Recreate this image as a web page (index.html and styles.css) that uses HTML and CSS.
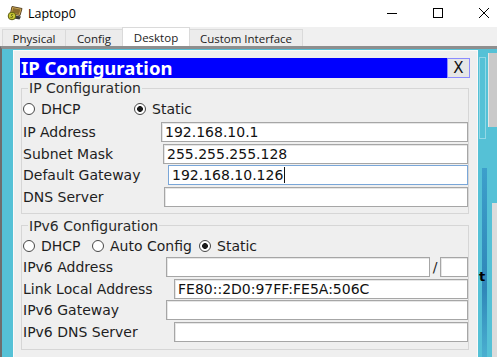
FILE: index.html
```html
<!DOCTYPE html>
<html>
<head>
<meta charset="utf-8">
<title>Laptop0</title>
<link rel="stylesheet" href="styles.css">
</head>
<body>
<div class="window">
  <div class="titlebar">
    <svg class="app-icon" viewBox="0 0 16 16">
      <polygon points="5,1.5 15,3.5 13,10.5 3.5,8.5" fill="#d8b25a" stroke="#5b4624" stroke-width="1"/>
      <polygon points="6,3 13.5,4.5 12,9.3 5,7.8" fill="#8a6a2c"/>
      <polygon points="3,9.5 14,11.5 12.5,14.5 1,12.5" fill="#3b3b3b"/>
      <circle cx="5" cy="11" r="3.8" fill="#c9c934" stroke="#5d5d12" stroke-width="1"/>
      <path d="M6.2 9.6 C5 8.9 3.6 9.6 4.6 10.6 C5.6 11.4 6.4 12.2 4.6 12.6 C4 12.7 3.6 12.5 3.4 12.2" fill="none" stroke="#4a4a0e" stroke-width="0.9"/>
    </svg>
    <span class="title">Laptop0</span>
    <div class="controls">
      <span class="ctl"><svg viewBox="0 0 10 10"><line x1="0" y1="5.5" x2="10" y2="5.5" stroke="#000" stroke-width="1"/></svg></span>
      <span class="ctl"><svg viewBox="0 0 10 10"><rect x="0.5" y="0.5" width="9" height="9" fill="none" stroke="#000" stroke-width="1"/></svg></span>
      <span class="ctl"><svg viewBox="0 0 10 10"><path d="M0 0 L10 10 M10 0 L0 10" stroke="#000" stroke-width="1"/></svg></span>
    </div>
  </div>

  <div class="tabs">
    <div class="tab t-phys">Physical</div>
    <div class="tab t-conf">Config</div>
    <div class="tab t-desk active">Desktop</div>
    <div class="tab t-cust">Custom Interface</div>
  </div>

  <div class="frame">
    <div class="gutter"></div>
    <div class="dialog">
      <div class="dlg-head">
        <span class="dlg-title">IP Configuration</span>
        <span class="dlg-close">X</span>
      </div>

      <fieldset class="group g4">
        <legend>IP Configuration</legend>
        <div class="radios">
          <span class="opt o4-dhcp"><span class="radio"></span>DHCP</span>
          <span class="opt"><span class="radio on"></span>Static</span>
        </div>
        <div class="rows">
          <div class="row"><span class="lbl l-ip">IP Address</span><span class="field">192.168.10.1</span></div>
          <div class="row"><span class="lbl l-mask">Subnet Mask</span><span class="field">255.255.255.128</span></div>
          <div class="row"><span class="lbl l-gw">Default Gateway</span><span class="field focus">192.168.10.126<span class="caret"></span></span></div>
          <div class="row"><span class="lbl l-dns">DNS Server</span><span class="field"></span></div>
        </div>
      </fieldset>

      <fieldset class="group g6">
        <legend>IPv6 Configuration</legend>
        <div class="radios">
          <span class="opt o6-dhcp"><span class="radio"></span>DHCP</span>
          <span class="opt o6-auto"><span class="radio"></span>Auto Config</span>
          <span class="opt"><span class="radio on"></span>Static</span>
        </div>
        <div class="rows">
          <div class="row"><span class="lbl l-v6addr">IPv6 Address</span><span class="field"></span><span class="slash">/</span><span class="field prefix"></span></div>
          <div class="row"><span class="lbl l-link">Link Local Address</span><span class="field">FE80::2D0:97FF:FE5A:506C</span></div>
          <div class="row"><span class="lbl l-v6gw">IPv6 Gateway</span><span class="field"></span></div>
          <div class="row"><span class="lbl l-v6dns">IPv6 DNS Server</span><span class="field"></span></div>
        </div>
      </fieldset>
    </div>
    <div class="strip">
      <div class="strip-outline"></div>
      <div class="strip-scroll"></div>
      <div class="strip-dark"></div>
      <div class="strip-gray"></div>
      <span class="strip-t">t</span>
    </div>
  </div>
</div>
</body>
</html>
```

FILE: styles.css
```css
* { box-sizing: border-box; }

html, body {
  margin: 0;
  padding: 0;
  width: 497px;
  height: 357px;
  overflow: hidden;
  background: #ffffff;
}

body {
  font-family: "DejaVu Sans", Verdana, sans-serif;
  color: #1e1e1e;
}

.window {
  display: flex;
  flex-direction: column;
  height: 357px;
}

/* title bar */
.titlebar {
  height: 27px;
  flex: none;
  display: flex;
  align-items: center;
  background: #fff;
}

.app-icon {
  width: 16px;
  height: 16px;
  margin-left: 7px;
  margin-top: -2px;
}

.title {
  margin-left: 5px;
  font-family: "Open Sans", "Noto Sans", sans-serif;
  font-size: 12.5px;
  color: #000;
}

.controls {
  margin-left: auto;
  margin-right: -10px;
  display: flex;
  height: 27px;
}

.ctl {
  width: 46px;
  height: 27px;
  display: flex;
  align-items: center;
  justify-content: center;
}

.ctl svg {
  width: 10px;
  height: 10px;
  margin-top: -2px;
}

/* tabs */
.tabs {
  height: 19px;
  flex: none;
  display: flex;
  align-items: flex-end;
  padding-left: 2px;
  background: #f0f0f0;
}

.tab {
  height: 17px;
  margin-right: -1px;
  border: 1px solid #dadada;
  border-bottom: none;
  background: #ececec;
  display: flex;
  align-items: center;
  justify-content: center;
  font-family: "Open Sans", "Noto Sans", sans-serif;
  font-size: 11.5px;
  color: #222;
}

.tab.active {
  height: 19px;
  background: #fff;
}

.t-phys { width: 64px; }
.t-conf { width: 58px; }
.t-desk { width: 68px; }
.t-cust { width: 114px; }

/* frame */
.frame {
  flex: 1;
  min-height: 0;
  display: flex;
  border-top: 3px solid #8e8e8e;
  border-left: 2px solid #6e6e6e;
  padding-top: 1px;
  background: #55c1d6;
}

.gutter {
  width: 11px;
  flex: none;
}

.dialog {
  width: 465px;
  flex: none;
  background: #efefef;
  border: 1px solid #fafafa;
  border-bottom: none;
  padding: 7px 7px 0 6px;
}

.dlg-head {
  height: 20px;
  display: flex;
  background: #0000ff;
}

.dlg-title {
  flex: 1;
  padding-left: 1px;
  color: #fff;
  font-family: "Noto Sans", "Open Sans", sans-serif;
  font-weight: bold;
  font-size: 18.5px;
  line-height: 20px;
  white-space: nowrap;
}

.dlg-close {
  width: 23px;
  height: 20px;
  flex: none;
  display: flex;
  align-items: center;
  justify-content: center;
  background: #e6e6e6;
  border: 1px solid #8c8cff;
  font-size: 15px;
  color: #111;
}

/* group boxes */
.group {
  margin: 3px 1px 0;
  padding: 0 0 6px 0;
  border: 1px solid #d6d6d6;
  min-width: 0;
}

.g6 {
  margin-top: 5px;
  padding-bottom: 7px;
}

.group legend {
  margin-left: 6px;
  padding: 0 1px;
  font-size: 14px;
  line-height: 14px;
  color: #2a2a2a;
}

.radios {
  height: 18px;
  margin-top: 5px;
  padding-left: 1px;
  display: flex;
  align-items: center;
}

.g6 .radios {
  margin-top: 4px;
}

.opt {
  display: flex;
  align-items: center;
  font-size: 14px;
  white-space: nowrap;
}

.o4-dhcp { width: 111px; }
.o6-dhcp { width: 69px; }
.o6-auto { width: 107px; }

.radio {
  width: 12px;
  height: 12px;
  flex: none;
  margin-right: 6px;
  border: 1px solid #474747;
  border-radius: 50%;
  background: #fff;
}

.radio.on {
  background: radial-gradient(circle, #1a1a1a 0 2.6px, #fff 3.2px);
}

.rows {
  margin-top: 4px;
  display: flex;
  flex-direction: column;
  gap: 1.5px;
}

.g6 .rows {
  margin-top: 2.5px;
}

.row {
  height: 20px;
  display: flex;
  align-items: center;
}

.lbl {
  flex: none;
  padding-left: 1px;
  font-size: 14px;
  line-height: 20px;
  white-space: nowrap;
}

.l-ip { width: 139px; }
.l-mask { width: 141px; }
.l-gw { width: 146px; }
.l-dns { width: 142px; }
.l-v6addr { width: 144px; }
.l-link { width: 152px; }
.l-v6gw { width: 144px; }
.l-v6dns { width: 152px; }

.field {
  flex: 1;
  height: 20px;
  display: flex;
  align-items: center;
  padding-left: 3px;
  background: #fff;
  border: 1px solid #a6a6a6;
  box-shadow: inset 1px 1px 0 #e6e6e6;
  font-size: 14px;
  line-height: 18px;
  color: #111;
  white-space: nowrap;
  overflow: hidden;
}

.field.focus {
  border-color: #79a6d8;
  box-shadow: none;
}

.field.prefix {
  flex: none;
  width: 28px;
}

.slash {
  width: 10px;
  flex: none;
  text-align: center;
  font-size: 14px;
}

.caret {
  width: 1px;
  height: 16px;
  margin-left: 1px;
  background: #111;
}

/* background fragments at the right edge */
.strip {
  flex: 1;
  position: relative;
  overflow: hidden;
}

.strip-outline {
  position: absolute;
  left: 1px;
  top: 7px;
  width: 7px;
  height: 82px;
  border: 1px solid #93d8e6;
}

.strip-scroll {
  position: absolute;
  left: 10px;
  top: 3px;
  width: 9px;
  height: 74px;
  background: #c9c9c9;
  border-left: 1px solid #e6e6e6;
}

.strip-dark {
  position: absolute;
  left: 4px;
  top: 118px;
  width: 5px;
  height: 200px;
  background: linear-gradient(#3d9fcb, #2f86b8 60%, #4fb6d4);
}

.strip-gray {
  position: absolute;
  left: 14px;
  top: 153px;
  width: 5px;
  height: 160px;
  background: #dcdcdc;
}

.strip-t {
  position: absolute;
  left: 1px;
  top: 219px;
  font-family: "DejaVu Sans", sans-serif;
  font-weight: bold;
  font-size: 13px;
  color: #000;
}
```
